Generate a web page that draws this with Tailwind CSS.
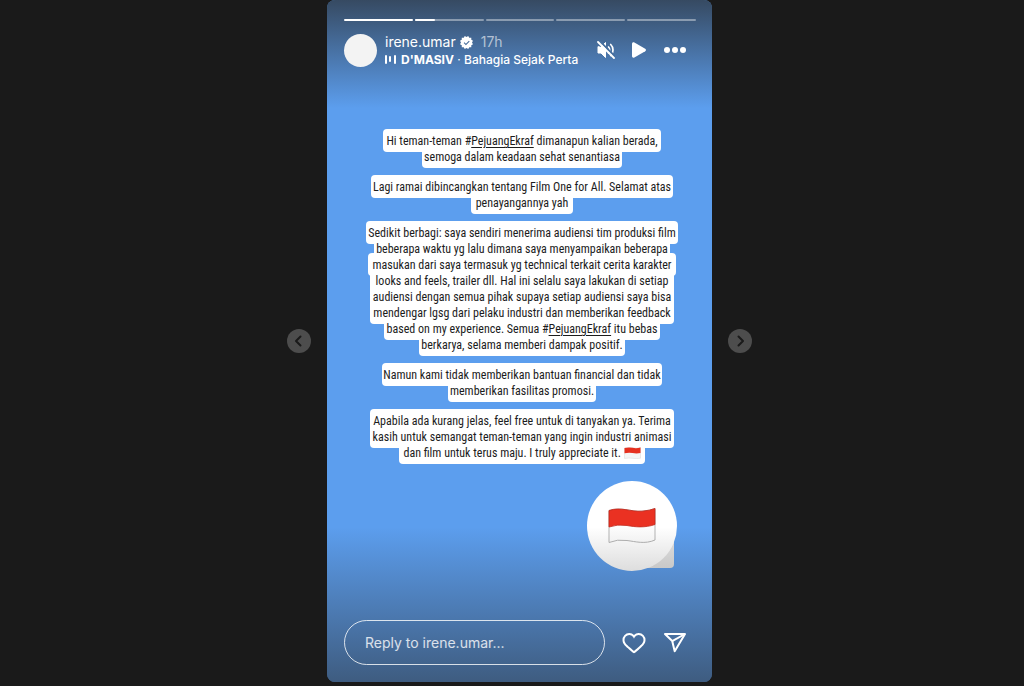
<!DOCTYPE html>
<html lang="id">
<head>
    <meta charset="utf-8"/>
    <meta content="width=device-width, initial-scale=1.0" name="viewport"/>
    <title>Story - irene.umar</title>
    <script src="https://cdn.jsdelivr.net/npm/@tailwindcss/browser@4"></script>
</head>
<body class="min-h-screen bg-[#1a1a1a] flex items-stretch justify-center gap-4 pl-[15px] pb-1 font-['Inter','Liberation_Sans',sans-serif] text-white">
    <!-- Prev -->
    <button type="button" aria-label="Sebelumnya" class="self-center flex items-center justify-center size-6 rounded-full bg-[#4d4d4d] text-[#1a1a1a]">
        <svg class="size-4" viewBox="0 0 16 16" fill="none" stroke="currentColor" stroke-width="2" stroke-linecap="round" stroke-linejoin="round"><path d="M9.5 3.5 5 8l4.500 4.500"/></svg>
    </button>

    <!-- Story card -->
    <main class="relative flex flex-col w-full max-w-[385px] rounded-lg overflow-hidden bg-[#5c9eee]">
        <div class="absolute inset-x-0 top-0 h-[108px] bg-linear-to-b from-[#262626]/70 to-[#262626]/0 pointer-events-none"></div>

        <header class="relative px-4 pt-[19px]">
            <div class="flex gap-[2px] pl-px">
                <div class="flex-1 h-[2px] rounded-full bg-white"></div>
                <div class="flex-1 h-[2px] rounded-full bg-white/40"><div class="h-full rounded-full bg-white" style="width: 29%"></div></div>
                <div class="flex-1 h-[2px] rounded-full bg-white/40"></div>
                <div class="flex-1 h-[2px] rounded-full bg-white/40"></div>
                <div class="flex-1 h-[2px] rounded-full bg-white/40"></div>
            </div>
            <div class="flex items-center pt-[11px] pl-px">
                <div class="size-[33px] shrink-0 rounded-full bg-[#f3f3f3]"></div>
                <div class="flex-1 min-w-0 pl-2">
                    <div class="flex items-center text-sm leading-5">
                        <a href="#" class="mr-1">irene.umar</a>
                        <svg class="size-[13px] mr-2" viewBox="0 0 40 40" fill="white"><path fill-rule="evenodd" d="M19.998 3.094 14.638 0l-2.972 5.150H5.432v6.354L0 14.640 3.094 20 0 25.359l5.432 3.137v5.905h5.975L14.638 40l5.360-3.094L25.358 40l3.232-5.600h6.162v-6.010L40 25.359 36.905 20 40 14.641l-5.248-3.030v-6.460h-6.419L25.358 0l-5.360 3.094Zm7.415 11.225 2.254 2.287-11.430 11.500-6.835-6.930 2.244-2.258 4.587 4.581 9.180-9.180Z"/></svg>
                        <span class="text-white/60">17h</span>
                    </div>
                    <div class="flex items-center h-4 overflow-hidden text-xs leading-4 whitespace-nowrap">
                        <svg class="w-3 h-3 mr-1 shrink-0" viewBox="0 0 12 12" fill="white"><rect x="0" y="1" width="2" height="9" rx="1"/><rect x="4" y="2" width="2" height="6" rx="1"/><rect x="9" y="1" width="2" height="9" rx="1"/></svg>
                        <span><b class="font-bold">D'MASIV</b> · <span class="font-medium">Bahagia Sejak Perta</span></span>
                    </div>
                </div>
                <div class="flex items-center gap-4 pr-[9px]">
                    <button type="button" aria-label="Bunyikan">
                        <svg class="size-[18px]" viewBox="0 0 18 18" fill="none" stroke="white" stroke-linecap="round"><path d="M1 6v6h3l4.500 4.500V1.500L4 6Z" fill="white" stroke-linejoin="round"/><path stroke-width="1.700" d="M11.500 6c1.500 1.600 1.500 4.400 0 6M13.700 3.500c3.100 3 3.100 8 0 11"/><path stroke="#466f9f" stroke-width="2" d="M2.500 0 18 15.500"/><path stroke-width="1.800" d="M1 1l16 16"/></svg>
                    </button>
                    <button type="button" aria-label="Putar">
                        <svg class="size-4" viewBox="0 0 16 16" fill="white"><path d="M1 1.900C1 .6 2.200 0 3.400.6L14.200 6.700c1 .6 1 2 0 2.600L3.400 15.400C2.200 16 1 15.400 1 14.100Z"/></svg>
                    </button>
                    <button type="button" aria-label="Menu">
                        <svg class="w-6 h-4" viewBox="0 0 24 16" fill="white"><circle cx="4" cy="8" r="3"/><circle cx="12" cy="8" r="3"/><circle cx="20" cy="8" r="3"/></svg>
                    </button>
                </div>
            </div>
        </header>

        <!-- Story text, one block per line -->
        <div class="flex flex-col gap-[7px] pl-[5px] pt-[61px] font-['Roboto_Condensed','Liberation_Sans_Narrow',sans-serif] text-xs leading-4 text-[#1c1c1c] text-center whitespace-nowrap">
            <p>
                <span class="block mx-auto pt-1 pb-[3px] rounded bg-white w-[278px]">Hi teman-teman #<a href="#" class="underline underline-offset-2">PejuangEkraf</a> dimanapun kalian berada,</span>
                <span class="block mx-auto -mt-[7px] pt-1 pb-[3px] rounded bg-white w-[200px]">semoga dalam keadaan sehat senantiasa</span>
            </p>
            <p>
                <span class="block mx-auto pt-1 pb-[3px] rounded bg-white w-[302px]">Lagi ramai dibincangkan tentang Film One for All. Selamat atas</span>
                <span class="block mx-auto -mt-[7px] pt-1 pb-[3px] rounded bg-white w-[102px]">penayangannya yah</span>
            </p>
            <p>
                <span class="block mx-auto pt-1 pb-[3px] rounded bg-white w-[312px]">Sedikit berbagi: saya sendiri menerima audiensi tim produksi film</span>
                <span class="block mx-auto -mt-[7px] pt-1 pb-[3px] rounded bg-white w-[296px]">beberapa waktu yg lalu dimana saya menyampaikan beberapa</span>
                <span class="block mx-auto -mt-[7px] pt-1 pb-[3px] rounded bg-white w-[308px]">masukan dari saya termasuk yg technical terkait cerita karakter</span>
                <span class="block mx-auto -mt-[7px] pt-1 pb-[3px] rounded bg-white w-[304px]">looks and feels, trailer dll. Hal ini selalu saya lakukan di setiap</span>
                <span class="block mx-auto -mt-[7px] pt-1 pb-[3px] rounded bg-white w-[304px]">audiensi dengan semua pihak supaya setiap audiensi saya bisa</span>
                <span class="block mx-auto -mt-[7px] pt-1 pb-[3px] rounded bg-white w-[304px]">mendengar lgsg dari pelaku industri dan memberikan feedback</span>
                <span class="block mx-auto -mt-[7px] pt-1 pb-[3px] rounded bg-white w-[276px]">based on my experience. Semua #<a href="#" class="underline underline-offset-2">PejuangEkraf</a> itu bebas</span>
                <span class="block mx-auto -mt-[7px] pt-1 pb-[3px] rounded bg-white w-[206px]">berkarya, selama memberi dampak positif.</span>
            </p>
            <p>
                <span class="block mx-auto pt-1 pb-[3px] rounded bg-white w-[280px]">Namun kami tidak memberikan bantuan financial dan tidak</span>
                <span class="block mx-auto -mt-[7px] pt-1 pb-[3px] rounded bg-white w-[148px]">memberikan fasilitas promosi.</span>
            </p>
            <p>
                <span class="block mx-auto pt-1 pb-[3px] rounded bg-white w-[304px]">Apabila ada kurang jelas, feel free untuk di tanyakan ya. Terima</span>
                <span class="block mx-auto -mt-[7px] pt-1 pb-[3px] rounded bg-white w-[304px]">kasih untuk semangat teman-teman yang ingin industri animasi</span>
                <span class="block mx-auto -mt-[7px] pt-1 pb-[3px] rounded bg-white w-[246px]">dan film untuk terus maju. I truly appreciate it.
                    <svg class="inline-block w-[17px] h-3 align-[-2px]" viewBox="0 0 17 12"><path d="M.5 1Q4.500 0 8.500.8T16.500.5V11.200Q12.500 12 8.500 11.300T.5 11.500Z" fill="#f4f4f4" stroke="#d8d8d8" stroke-width=".5"/><path d="M.5 1Q4.500 0 8.500.8T16.500.5V6Q12.500 6.800 8.500 6T.5 6.300Z" fill="#e6301f"/></svg></span>
            </p>
        </div>

        <!-- Flag sticker -->
        <div class="flex justify-end pt-[17px] pr-[35px]">
            <svg class="size-[90px]" viewBox="0 0 90 90">
                <path d="M50 60H87V83Q87 87 83 87H50Z" fill="#e4e4e4"/>
                <circle cx="45" cy="45" r="45" fill="white"/>
                <path d="M22 29.500C34 25.500 44 31 55 30.200Q63 29.500 68 27.500V59C58 63.500 48 60.500 40 59.500Q30 58 22 61.500Z" fill="#fdfdfd" stroke="#b5b5b5" stroke-linejoin="round"/>
                <path d="M22 29.500C34 25.500 44 31 55 30.200Q63 29.500 68 27.500V43.500C58 47 48 46 40 44.500Q30 43 22 46Z" fill="#ea3122" stroke="#c1281c" stroke-width=".8"/>
            </svg>
        </div>

        <div class="absolute inset-x-0 bottom-0 h-[155px] bg-linear-to-t from-[#262626]/55 to-[#262626]/0 pointer-events-none"></div>

        <!-- Reply -->
        <form class="relative flex items-center mt-auto px-[17px] pb-[17px]">
            <input type="text" aria-label="Reply to irene.umar" placeholder="Reply to irene.umar..." class="flex-1 min-w-0 h-[45px] px-5 rounded-full border border-white/80 bg-transparent text-sm text-white placeholder:text-white/80 outline-none"/>
            <button type="button" aria-label="Suka" class="ml-[17px]">
                <svg class="size-6" viewBox="0 0 24 24" fill="white"><path d="M16.792 3.904A4.989 4.989 0 0 1 21.500 9.122c0 3.072-2.652 4.959-5.197 7.222-2.512 2.243-3.865 3.469-4.303 3.752-.477-.309-2.143-1.823-4.303-3.752C5.141 14.072 2.500 12.167 2.500 9.122a4.989 4.989 0 0 1 4.708-5.218 4.210 4.210 0 0 1 3.675 1.941c.84 1.175.98 1.763 1.120 1.763s.278-.588 1.110-1.766a4.170 4.170 0 0 1 3.679-1.938m0-2a6.040 6.040 0 0 0-4.797 2.127 6.052 6.052 0 0 0-4.787-2.127A6.985 6.985 0 0 0 .5 9.122c0 3.610 2.550 5.827 5.015 7.970.283.246.569.494.853.747l1.027.918a44.998 44.998 0 0 0 3.518 3.018 2 2 0 0 0 2.174 0 45.263 45.263 0 0 0 3.626-3.115l.922-.824c.293-.26.590-.519.885-.774 2.334-2.025 4.980-4.320 4.980-7.940a6.985 6.985 0 0 0-6.708-7.218Z"/></svg>
            </button>
            <button type="button" aria-label="Kirim" class="ml-[17px] mr-2">
                <svg class="size-6" viewBox="0 0 24 24" fill="none" stroke="white" stroke-width="2" stroke-linejoin="round"><path d="M22 3 9.218 10.083"/><path d="M11.698 20.334 22 3.001H2l7.218 7.083Z"/></svg>
            </button>
        </form>
    </main>

    <!-- Next -->
    <button type="button" aria-label="Berikutnya" class="self-center flex items-center justify-center size-6 rounded-full bg-[#4d4d4d] text-[#1a1a1a]">
        <svg class="size-4" viewBox="0 0 16 16" fill="none" stroke="currentColor" stroke-width="2" stroke-linecap="round" stroke-linejoin="round"><path d="M6.500 3.500l4.500 4.500-4.500 4.500"/></svg>
    </button>
</body>
</html>
